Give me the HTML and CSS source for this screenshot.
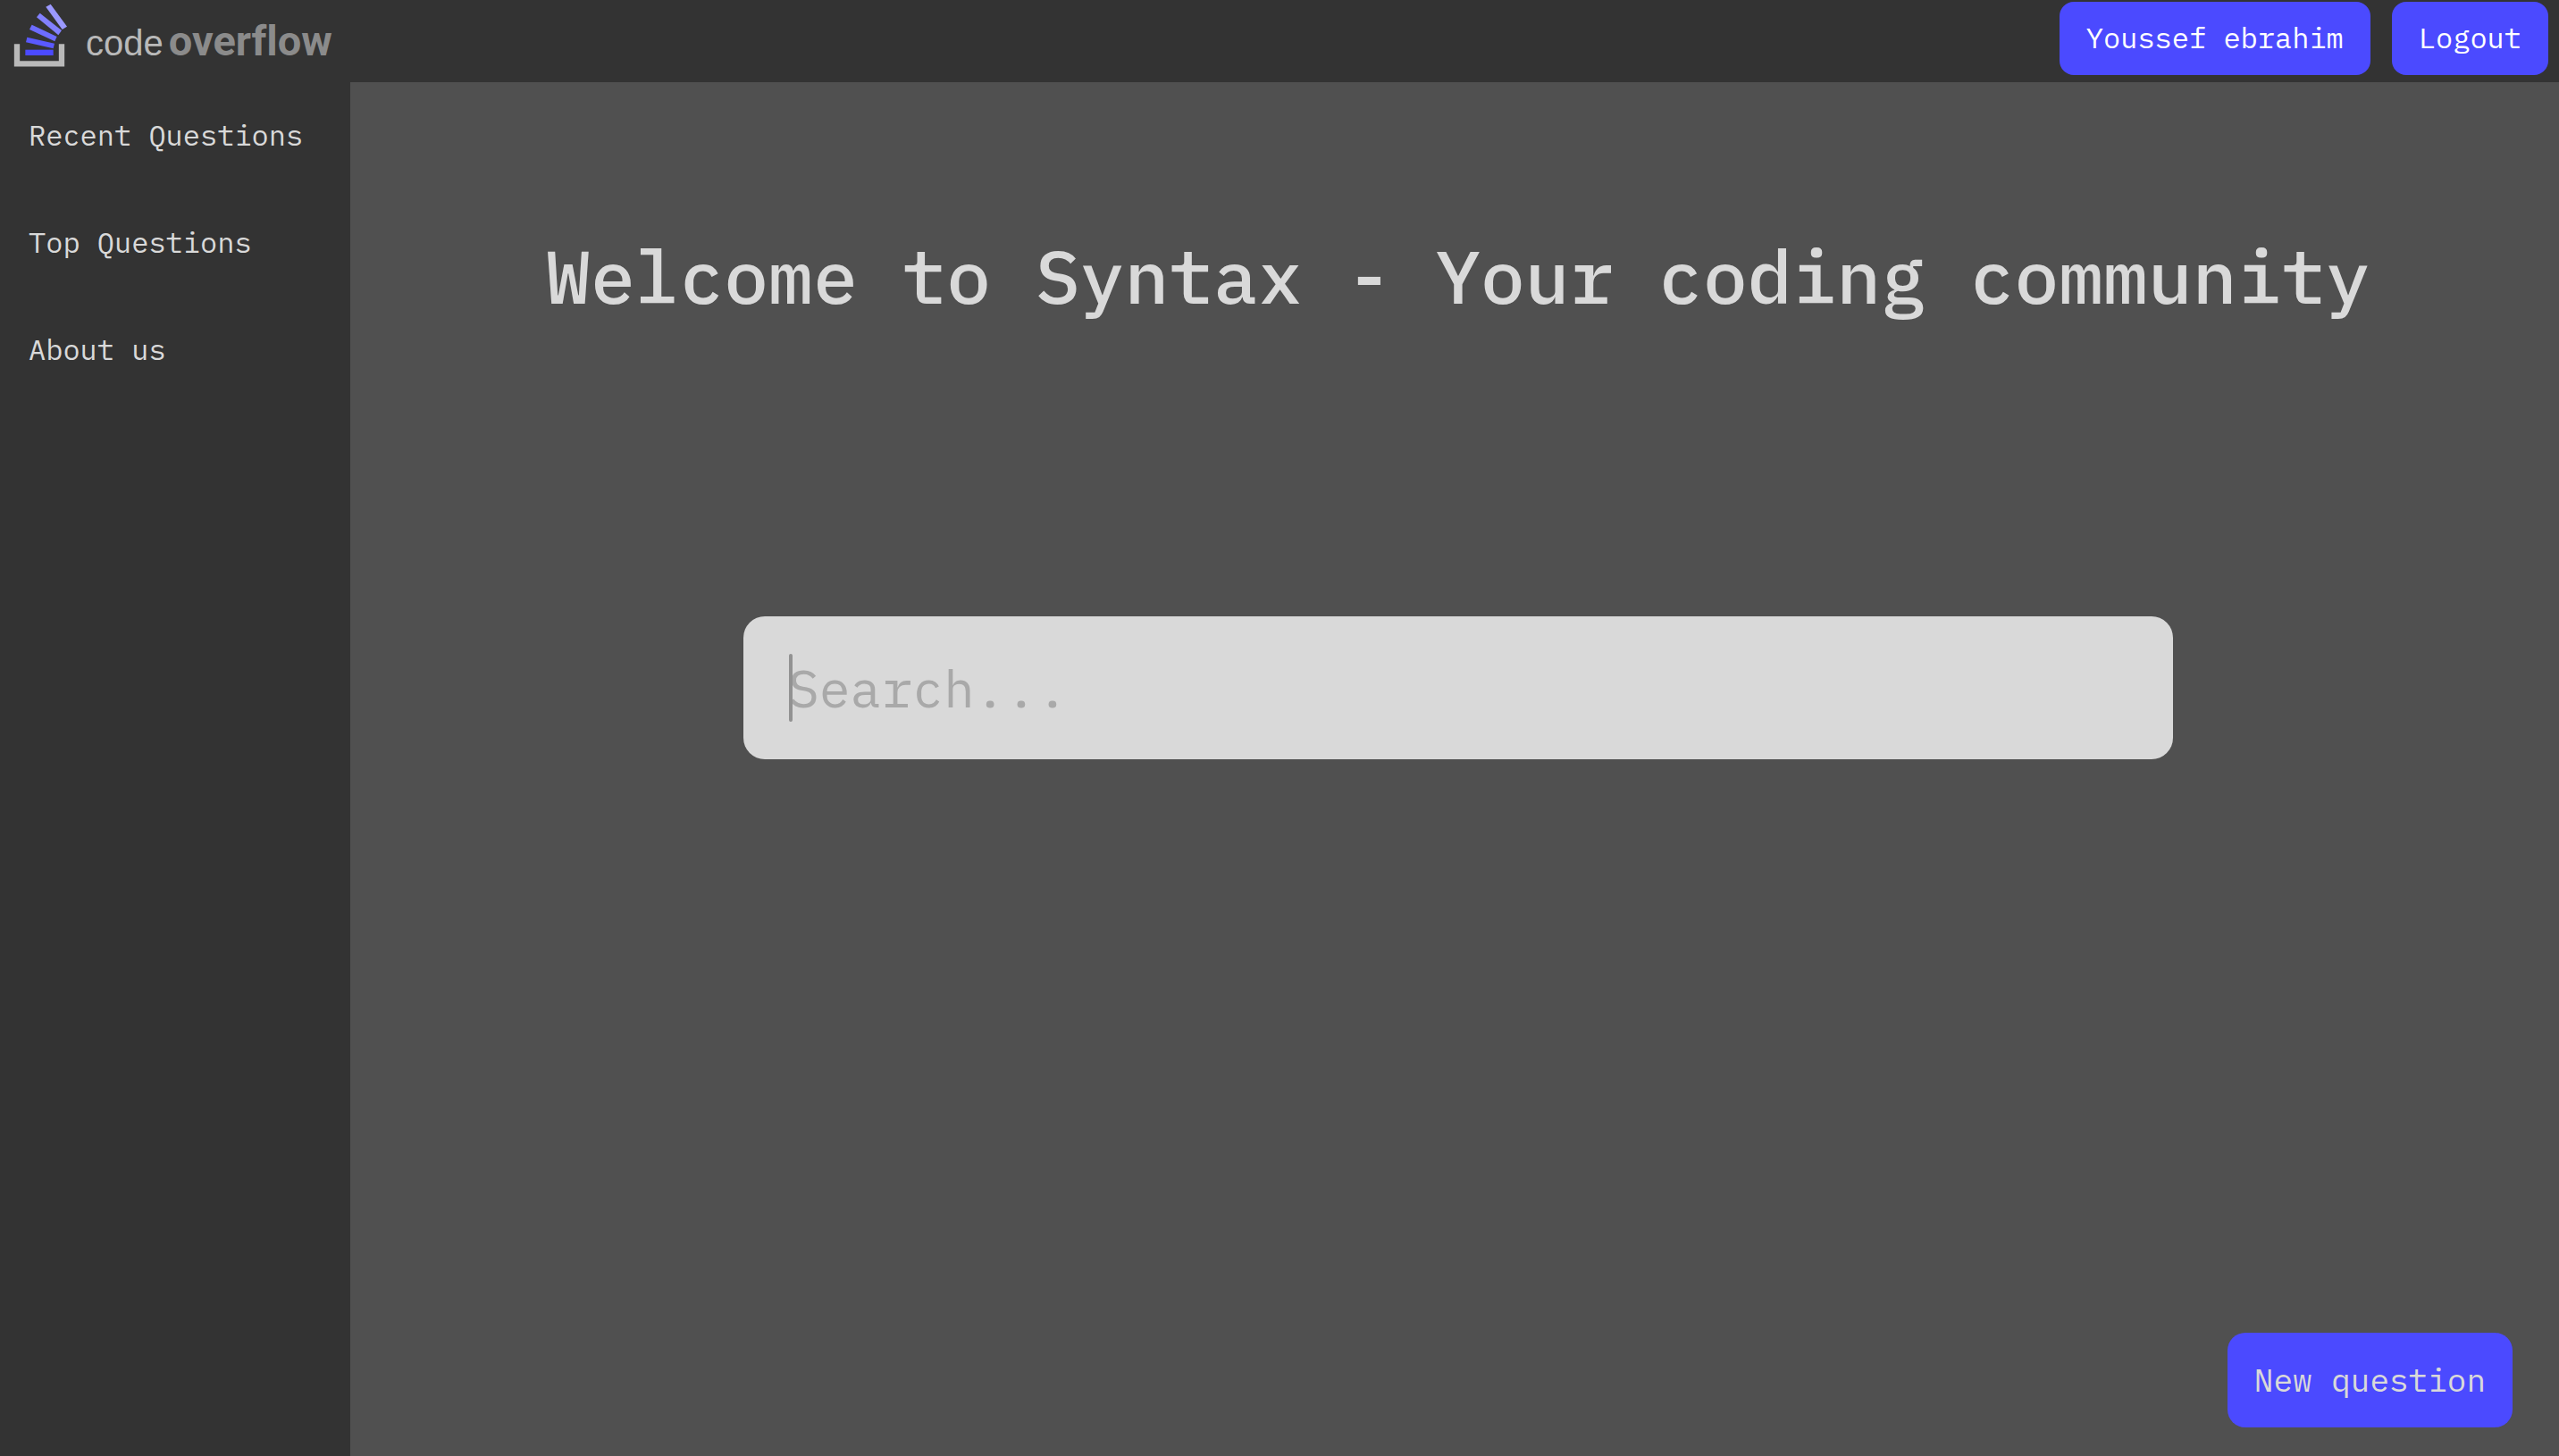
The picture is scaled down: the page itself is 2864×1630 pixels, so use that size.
FILE: index.html
```html
<!DOCTYPE html>
<html lang="en">
<head>
  <meta charset="utf-8">
  <meta name="viewport" content="width=device-width, initial-scale=1">
  <title>Code Overflow</title>
  <link rel="stylesheet" href="styles.css">
</head>
<body>
  <header class="topbar">
    <a class="logo" href="#">
      <svg class="logo-mark" viewBox="0 0 240 240" aria-hidden="true">
        <path d="M57 148V214H207V148" fill="none" stroke="#b9b9b9" stroke-width="19"/>
        <polygon points="85,167 179,167 179,186 85,186" fill="#4b4aff"/>
        <polygon points="91,125 183,146 179,163 87,142" fill="#5a59ff"/>
        <polygon points="107,83 191,123 184,139 99,99" fill="#6d6cff"/>
        <polygon points="134,44 207,102 196,118 123,58" fill="#8280ff"/>
        <polygon points="170,14 225,89 209,99 154,23" fill="#9b99ff"/>
      </svg>
      <span class="logo-text"><span class="logo-code">code</span><span class="logo-overflow">overflow</span></span>
    </a>
    <div class="account">
      <button class="button" type="button">Youssef ebrahim</button>
      <button class="button" type="button">Logout</button>
    </div>
  </header>
  <div class="layout">
    <nav class="sidebar">
      <a class="sidebar-link" href="#">Recent Questions</a>
      <a class="sidebar-link" href="#">Top Questions</a>
      <a class="sidebar-link" href="#">About us</a>
    </nav>
    <main class="content">
      <h1 class="title">Welcome to Syntax - Your coding community</h1>
      <form class="search">
        <input class="search-input" type="search" aria-label="Search" placeholder="Search...">
        <span class="search-caret"></span>
      </form>
      <button class="button button-ask" type="button">New question</button>
    </main>
  </div>
</body>
</html>
```
FILE: styles.css
```css
* {
  box-sizing: border-box;
}

body {
  display: flex;
  flex-direction: column;
  min-height: 100vh;
  margin: 0;
  background: #505050;
  color: #d9d9d9;
  font-family: "IBM Plex Mono", "Liberation Mono", monospace;
  font-size: 32px;
  line-height: 42px;
}

.topbar {
  display: flex;
  justify-content: space-between;
  align-items: flex-start;
  height: 92px;
  padding: 0 12px 0 0;
  background: #333333;
}

.logo {
  display: flex;
  text-decoration: none;
}

.logo-mark {
  width: 80px;
  height: 80px;
}

.logo-text {
  display: flex;
  align-items: baseline;
  gap: 6px;
  padding: 16px 0 0 16px;
  line-height: 60px;
}

.logo-code {
  color: #b9b9b9;
  font-family: "Liberation Sans", sans-serif;
  font-size: 40px;
}

.logo-overflow {
  color: #8b8b8b;
  font-family: Roboto, sans-serif;
  font-size: 47px;
  font-variant-ligatures: none;
  font-weight: 700;
}

.account {
  display: flex;
  gap: 24px;
  padding-top: 2px;
}

.button {
  padding: 19px 30px 21px;
  border: 0;
  border-radius: 16px;
  background: #4b4aff;
  color: #ffffff;
  font: inherit;
  cursor: pointer;
}

.layout {
  display: flex;
  flex: 1;
}

.sidebar {
  display: flex;
  flex-direction: column;
  gap: 78px;
  width: 392px;
  padding: 38px 32px;
  background: #333333;
}

.sidebar-link {
  color: inherit;
  text-decoration: none;
}

.content {
  display: flex;
  flex: 1;
  flex-direction: column;
  align-items: center;
  padding: 162px 52px 32px 60px;
}

.title {
  margin: 0;
  font-size: 83px;
  font-weight: 500;
  line-height: 110px;
  text-align: center;
}

.search {
  position: relative;
  width: 100%;
  max-width: 1600px;
  margin-top: 326px;
}

.search-input {
  display: block;
  width: 100%;
  height: 160px;
  padding: 0 50px;
  border: 0;
  border-radius: 24px;
  outline: 0;
  background: #d9d9d9;
  color: #333333;
  font: inherit;
  font-size: 58px;
  appearance: none;
}

.search-input::placeholder {
  color: #a9a9a9;
  opacity: 1;
}

.search-caret {
  position: absolute;
  top: 42px;
  left: 51px;
  width: 4px;
  height: 76px;
  border-radius: 2px;
  background: #929292;
}

.button-ask {
  align-self: flex-end;
  margin-top: auto;
  padding: 30px;
  border-radius: 20px;
  color: #d9d9d9;
  font-size: 36px;
  line-height: 46px;
}
```
